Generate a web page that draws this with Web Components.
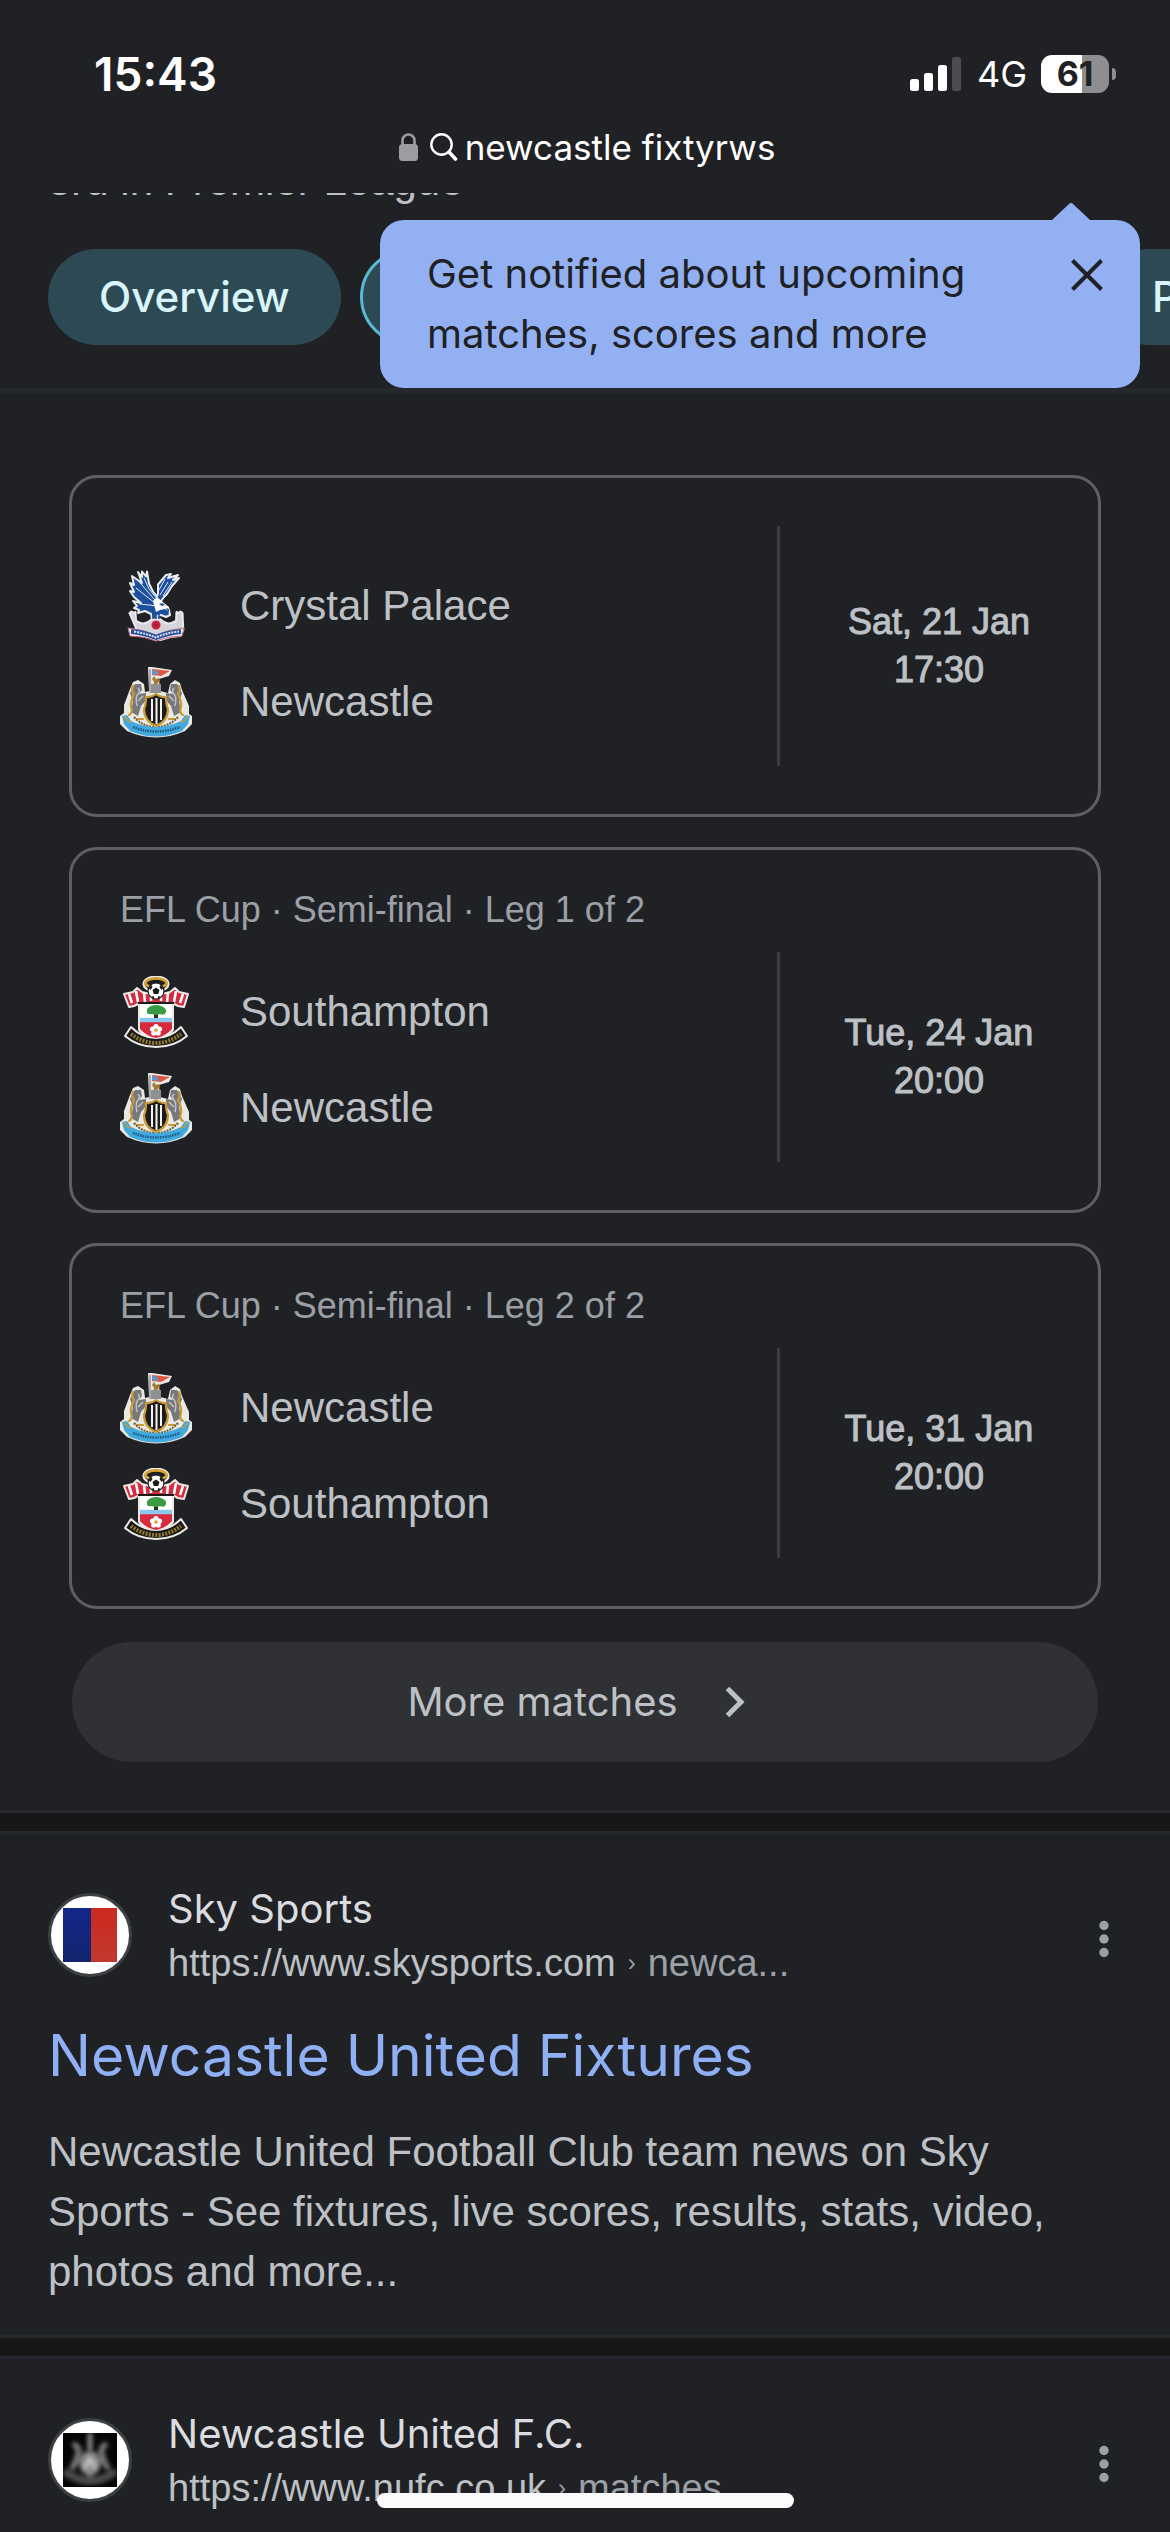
<!DOCTYPE html>
<html lang="en">
<head>
<meta charset="utf-8">
<meta name="viewport" content="width=device-width, initial-scale=1">
<title>newcastle fixtyrws</title>
<style>
  :root {
    --bg: #202124;
    --text: #bdc1c6;
    --muted: #9aa0a6;
    --sans: "Liberation Sans", Arial, sans-serif;
    --ui: Inter, Roboto, sans-serif;
  }
  html, body { margin: 0; height: 100%; background: var(--bg); }
  body { font-family: var(--sans); color: var(--text); }
</style>
</head>
<body>
<search-page></search-page>

<script>
const define = (name, html, setup) => {
  const template = document.createElement('template');
  template.innerHTML = html;
  customElements.define(name, class extends HTMLElement {
    constructor() {
      super();
      this.attachShadow({ mode: 'open' }).append(template.content.cloneNode(true));
    }
    connectedCallback() { if (setup) setup(this, this.shadowRoot); }
  });
};

/* ---------- status bar ---------- */
define('status-bar', `
<style>
  :host { display: flex; flex: none; justify-content: space-between; align-items: center; height: 76px; padding: 36px 54px 0 94px;
    font-family: var(--ui); color: #fff; }
  time { font-size: 46px; font-weight: 600; line-height: 56px; }
  .right { display: flex; align-items: center; }
  .net { font-size: 36px; line-height: 44px; margin: 0 14px 0 16px; }
  .battery { display: flex; align-items: center; gap: 3px; }
  .cell { width: 68px; height: 38px; border-radius: 11px; background: linear-gradient(90deg, #fff 60%, #8e8e91 60%);
    color: #202124; font-size: 34px; line-height: 38px; font-weight: 700; text-align: center; }
  .tip { width: 4px; height: 12px; border-radius: 0 4px 4px 0; background: #8e8e91; }
</style>
<time>15:43</time>
<div class="right">
  <svg width="51" height="34" viewBox="0 0 51 34" fill="#fff" aria-hidden="true">
    <rect x="0" y="22" width="9" height="12" rx="2.5"/><rect x="14" y="16" width="9" height="18" rx="2.5"/>
    <rect x="28" y="8" width="9" height="26" rx="2.5"/><rect x="42" y="0" width="9" height="34" rx="2.5" fill="#4d4d4f"/>
  </svg>
  <span class="net">4G</span>
  <div class="battery"><div class="cell">61</div><div class="tip"></div></div>
</div>`);

/* ---------- address bar ---------- */
define('address-bar', `
<style>
  :host { display: flex; flex: none; justify-content: center; align-items: center; padding: 11px 0 22px 4px; color: #fff;
    font: 35px/48px var(--ui); }
  .lock { margin-right: 12px; } .glass { margin-right: 7px; }
</style>
<svg class="lock" width="19" height="28" viewBox="0 0 19 28" aria-hidden="true">
  <rect x="0" y="11" width="19" height="17" rx="3.5" fill="#9c9ca1"/>
  <path d="M3.5 12V7.5a6 6 0 0 1 12 0V12" fill="none" stroke="#9c9ca1" stroke-width="2.6"/>
</svg>
<svg class="glass" width="28" height="28" viewBox="0 0 28 28" fill="none" stroke="#fff" stroke-linecap="round" aria-hidden="true">
  <circle cx="11.5" cy="11.5" r="10.2" stroke-width="2.4"/><path d="M19 19l6.5 7" stroke-width="3.6"/>
</svg>
<span><slot></slot></span>`);

/* ---------- filter chips ---------- */
define('filter-chip', `
<style>
  :host { display: block; flex: none; }
  :host([selected]) { flex: 1; }
  button { box-sizing: border-box; width: 100%; height: 96px; padding: 0 51px; border: 0; border-radius: 48px; background: #2d4a54;
    color: #d9f5fb; font: 500 42px/60px var(--ui); }
  :host([selected]) button { border: 3px solid #5bb8d4; }
</style>
<button type="button"><slot></slot></button>`, (host, root) => {
  if (host.hasAttribute('label')) root.querySelector('button').setAttribute('aria-label', host.getAttribute('label'));
});

/* ---------- notification tip ---------- */
define('notify-tip', `
<style>
  :host { display: flex; align-items: flex-start; justify-content: space-between; box-sizing: border-box; width: 760px; padding: 24px 32px 24px 47px;
    border-radius: 24px; background: #93b1f2; color: #202124; font: 40px/60px var(--ui); }
  .arrow { position: absolute; right: 50px; bottom: 100%; }
  p { margin: 0; width: 580px; }
  button { display: flex; padding: 10px 0; margin: 0; border: 0; background: none; color: inherit; }
</style>
<svg class="arrow" width="38" height="17" viewBox="0 0 38 17" aria-hidden="true"><path d="M0 17L17 1q2-2 4 0L38 17z" fill="#93b1f2"/></svg>
<p><slot></slot></p>
<button type="button" aria-label="Dismiss">
  <svg width="42" height="42" viewBox="0 0 42 42" fill="none" stroke="#202124" stroke-width="4"><path d="M6.5 6.500l29 29M35.500 6.500l-29 29"/></svg>
</button>`);

/* ---------- club crests ---------- */
const crests = {
  palace: `
  <g stroke="#e9ebef" stroke-width="2" stroke-linejoin="round">
    <path fill="#d3d5da" d="M9.500 43l2-1.500 2 1.500 2-1 .5 9c6 3 8 3 12 1l4-3h8l4 3c4 2 6 2 12-1l.5-9 2 1 2-1.500 2 1.500.8 17-3 6-10 1-10 3-10-3-10-1-3-5z"/>
    <path fill="#1c4f9c" d="M22 13L18 2l4 5V1.500l4 5 1-5 2 12 4 8 4 5 1-3 0-9L46 5l5-1-3 4 10-3-5 5 6-2-7 8-5 8-3 3-5 7 6 2 4 4 1 5-4 2-5-2-4 1v4l-5-1-1-5-6-3-7 2 1-3-5-2 3-2-4-5 8 2-7-6-4-6 4 1-4-9 4 2-2-9z"/>
  </g>
  <path fill="none" stroke="#dfe8f6" stroke-width="1" d="M17 9l10 12 8 9M16 18l10 8 9 7M24 8l5 11 9 11M19 34l10 1 9 1M40 25l8-13M43 26l9-14M39 20l6-11"/>
  <path fill="#fff" d="M33 31l4-4 7 6 5 4 1 5-5-3-5 1-4 2z"/>
  <path d="M39 34q4-2 6 1l-3 1zM46 38l3 1 0 4z" fill="#1c4f9c"/>
  <path d="M33 41v8M36 42v7M39 41v8" stroke="#1c4f9c" stroke-width="1.500"/>
  <circle cx="36" cy="55" r="4.500" fill="#d0213f"/><path d="M33 55h6M36 52v6" stroke="#8e1c33" stroke-width="1"/>
  <path fill="#f6f0f4" stroke="#c8687e" stroke-width="1" d="M8 58q14 1 28 7 14-6 28-7l-2 8q-14 0-26 5-12-5-26-5z"/>
  <path fill="none" stroke="#26509c" stroke-width="5" d="M11 61.500q13 1 25 6 12-5 25-6"/>
  <path fill="none" stroke="#dfe6f3" stroke-width="2" stroke-dasharray="2 1" d="M14 61.500q12 2 22 6 11-5 23-6"/>`,
  newcastle: `
  <path fill="#e9e8e3" d="M28 1l4 0 20 3-3 6-10 3 1 12 8 2 2-9 5-4 5 3 2 7 7 16 0 8 3 2 0 8-7 7q-29 13-58 0l-7-7 0-8 4-3 0-8 6-16 3-7 5-2 6 4 1 8 4-1z"/>
  <path d="M30 3v24" stroke="#98989b" stroke-width="1.600"/>
  <path fill="#e2553f" d="M32 3l18 2-9 5-9-1z"/><path fill="#5b9bd1" d="M32 4l6 1v4l-6-1z"/>
  <path fill="#a27c35" d="M34 10l2 3 3-1 1 3-3 3 1 3h-5l1-5-2-3z"/><path fill="#8f9092" d="M31 18h10v9H31z"/>
  <path fill="#77787b" d="M15 18l6 0 1 6-3 4 7-1 0 7-5 6-3 10-7-4 2-11-3-8zM57 18l-6 0-1 6 3 4-7-1 0 7 5 6 3 10 7-4-2-11 3-8z"/>
  <path fill="none" stroke="#c3c4c6" stroke-width="1.500" d="M18 22q3 3 0 6t-1 12M23 30l-5 5M54 22q-3 3 0 6t1 12M49 30l5 5"/>
  <path fill="none" stroke="#c99a38" stroke-width="2.200" stroke-linecap="round" d="M13 20q-2 4 1 8-4 8-3 13 2 6-2 8M59 20q2 4-1 8 4 8 3 13-2 6 2 8M17 53h6M49 53h6"/>
  <path fill="#1c1c1e" stroke="#c99a38" stroke-width="2.200" d="M26 31q5 1 10-3 5 4 10 3 0 8 2 12 0 12-12 17-12-5-12-17 2-4 2-12z"/>
  <path d="M32 33v22M36.500 32v26M41 33v21" stroke="#f4f4f2" stroke-width="2"/>
  <path fill="none" stroke="#6d5a2e" stroke-width="2" stroke-dasharray="2 1" d="M14 51q8 9 20 10M58 51q-8 9-20 10"/>
  <path fill="#42a9df" d="M2 50l5-1 4 6q25 12 50 0l4-6 5 1-2 8-6 7q-26 11-52 0l-6-7z"/>
  <path fill="none" stroke="#c99a38" stroke-width="1.500" d="M4 50l4 5 3 1M68 50l-4 5-3 1"/>
  <path fill="none" stroke="#1d5a83" stroke-width="2.600" stroke-dasharray="1.500 1" d="M13 61q23 9 47 0"/>`,
  southampton: `
  <g stroke="#edeae6" stroke-width="2" stroke-linejoin="round">
    <ellipse cx="36" cy="8" rx="12.500" ry="7.500" fill="#202022"/>
    <path fill="#d62a3d" d="M4 18l9-2 4-4 5 4 8 2h12l8-2 5-4 4 4 9 2-4 13-6-1-6-3-8 3H28l-8-3-6 3-5 1z"/>
    <path fill="#fff" d="M19 27h34v27q-6 8-17 9-11-1-17-9z"/>
    <path fill="#1b1b1a" d="M11 51q11 11 25 11t25-11l6 9Q54 71 36 71T5 60z"/>
  </g>
  <path d="M9 18l3 9M16 15l2 11M24 17l1 9M31 19v6M41 19v6M48 17l-1 9M56 15l-2 11M63 18l-3 9" stroke="#fff" stroke-width="2.600"/>
  <path d="M18 27h36" stroke="#1b1b1a" stroke-width="2"/>
  <ellipse cx="36" cy="7" rx="10.500" ry="4.500" fill="none" stroke="#d9a52e" stroke-width="2.600"/>
  <circle cx="36" cy="15" r="8" fill="#fff" stroke="#1b1b1a" stroke-width="1.200"/>
  <path d="M36 11.500l3.500 2.500-1.300 4h-4.400l-1.300-4zM28.500 12l3-3 1 2-2 3zM43.500 12l-3-3-1 2 2 3zM31 21l3-1 0 3zM41 21l-3-1 0 3z" fill="#1b1b1a"/>
  <path d="M20 46h32v7q-6 7-16 9-10-2-16-9z" fill="#d62a3d"/><path d="M20 44h32" stroke="#8cc8ec" stroke-width="4.500"/>
  <path d="M34 37h4l0 5h-4z" fill="#25331f"/>
  <path d="M27 36q-1-4 4-6 6-2 10 0 6 2 5 6-1 4-6 2-5 2-8 0-5 1-5-2z" fill="#3a9b45"/>
  <g fill="#fff"><circle cx="36" cy="50.500" r="2.600"/><circle cx="39.500" cy="53" r="2.600"/><circle cx="38.200" cy="57" r="2.600"/><circle cx="33.800" cy="57" r="2.600"/><circle cx="32.500" cy="53" r="2.600"/></g>
  <circle cx="36" cy="54" r="1.800" fill="#d9a52e"/>
  <path d="M11 58q12 9 25 9t25-9" fill="none" stroke="#8f7a2e" stroke-width="4" stroke-dasharray="2 1.300"/>`
};
define('team-row', `
<style>
  :host { display: flex; align-items: center; gap: 48px; height: 72px; font-size: 42px; line-height: 60px; color: #bdc1c6; }
  svg { display: block; flex: none; }
</style>
<svg width="72" height="72" viewBox="0 0 72 72" aria-hidden="true"></svg>
<span><slot></slot></span>`, (host, root) => {
  root.querySelector('svg').innerHTML = crests[host.getAttribute('crest')];
});

/* ---------- match card ---------- */
define('match-card', `
<style>
  :host { display: block; border: 3px solid #5f6063; border-radius: 28px; padding: 48px 0; }
  :host([stage]) { padding-top: 36px; }
  .stage { display: none; margin: 0 0 18px 48px; font-size: 36px; line-height: 48px; color: var(--muted); }
  :host([stage]) .stage { display: block; }
  .body { display: grid; grid-template-columns: minmax(0, 705fr) minmax(0, 321fr); }
  .teams { display: flex; flex-direction: column; gap: 24px; padding: 44px 0 28px 48px; }
  :host([stage]) .teams { padding-top: 24px; padding-bottom: 18px; }
  .when { display: flex; flex-direction: column; align-items: center; justify-content: center; border-left: 3px solid #3c3d41;
    font-size: 36px; line-height: 48px; -webkit-text-stroke: 1px currentColor; }
</style>
<div class="stage"></div>
<div class="body">
  <div class="teams"><slot></slot></div>
  <div class="when"><slot name="day"></slot><slot name="time"></slot></div>
</div>`, (host, root) => {
  root.querySelector('.stage').textContent = host.getAttribute('stage') || '';
});

/* ---------- more button ---------- */
define('more-button', `
<style>
  :host { display: block; }
  button { display: flex; align-items: center; justify-content: center; gap: 47px; width: 100%; height: 120px; padding: 0 18px 0 0;
    border: 0; border-radius: 60px; background: #303134; color: var(--text); font: 40px/60px var(--ui); }
</style>
<button type="button"><span><slot></slot></span>
  <svg width="20" height="32" viewBox="0 0 20 32" fill="none" stroke="#bdc1c6" stroke-width="5" aria-hidden="true"><path d="M2.500 2.500L16 16 2.500 29.500"/></svg>
</button>`);

/* ---------- band between blocks ---------- */
define('block-gap', `
<style>:host { display: block; flex: none; height: 18px; background: #171717; border: solid #25282c; border-width: 3px 0; }</style>`);

/* ---------- search result ---------- */
const icons = {
  sky: `<defs><linearGradient id="b" x2="0" y2="1"><stop stop-color="#12278a"/><stop offset="1" stop-color="#12246c"/></linearGradient>
    <linearGradient id="r" x2="0" y2="1"><stop stop-color="#cc291f"/><stop offset="1" stop-color="#c0392f"/></linearGradient></defs>
    <rect width="28" height="54" fill="url(#b)"/><rect x="28" width="26" height="54" fill="url(#r)"/>`,
  nufc: `<defs><filter id="s"><feGaussianBlur stdDeviation="2"/></filter></defs><rect width="54" height="54" fill="#050505"/>
    <g filter="url(#s)" fill="none" stroke-linecap="round"><path d="M27 2v14" stroke="#8a8a8a" stroke-width="5"/>
    <path d="M12 12q5 3 3 10t-5 12M42 12q-5 3-3 10t5 12" stroke="#777" stroke-width="6"/>
    <path d="M4 40q23 16 46 0" stroke="#4c4c4c" stroke-width="8"/>
    <path d="M21 19h12l5 10-2 9-9 6-9-6-2-9z" fill="#8b8b8b"/><path d="M22 34l5-8 5 8" stroke="#ccc" stroke-width="3"/></g>`
};
define('search-result', `
<style>
  :host { display: block; flex: none; padding: 48px 48px 33px; }
  header { display: flex; align-items: center; }
  .icon { display: flex; align-items: center; justify-content: center; flex: none; box-sizing: border-box; width: 84px; height: 84px;
    margin-right: 36px; border: 3px solid #3c4043; border-radius: 50%; background: #fff; }
  .source { flex: 1; min-width: 0; }
  .name { font: 40px/54px var(--ui); color: #dadce0; margin-bottom: 3px; }
  .url { display: flex; align-items: center; gap: 12px; font-size: 38px; line-height: 48px; white-space: nowrap; }
  .crumb { font-size: 24px; }
  .crumb, .path { color: var(--muted); }
  .menu { display: flex; margin: 0; padding: 9px 0 0; border: 0; background: none; }
  h3 { margin: 30px 0 27px; font: 57px/78px var(--ui); }
  h3 a { color: #8fb0f4; text-decoration: none; }
  p { margin: 0; font-size: 42px; line-height: 60px; max-width: 1020px; }
</style>
<header>
  <div class="icon"><svg width="54" height="54" viewBox="0 0 54 54" aria-hidden="true"></svg></div>
  <div class="source">
    <div class="name"><slot name="name"></slot></div>
    <div class="url"><slot name="url"></slot><span class="crumb">›</span><span class="path"><slot name="path"></slot></span></div>
  </div>
  <button class="menu" type="button" aria-label="About this result">
    <svg width="36" height="42" viewBox="0 0 36 42" fill="#9aa0a6"><circle cx="18" cy="7.500" r="4.700"/><circle cx="18" cy="21" r="4.700"/><circle cx="18" cy="34.500" r="4.700"/></svg>
  </button>
</header>
<div class="detail"><h3><a href="#"><slot name="title"></slot></a></h3><p><slot></slot></p></div>`, (host, root) => {
  root.querySelector('.icon svg').innerHTML = icons[host.getAttribute('icon')];
  if (!host.querySelector('[slot=title]')) root.querySelector('.detail').remove();
});

/* ---------- whole page ---------- */
define('search-page', `
<style>
  :host { display: flex; flex-direction: column; height: 100vh; overflow: hidden; position: relative; }
  .top { flex: none; position: relative; overflow: hidden; padding-bottom: 42px; border-bottom: 6px solid #24272b; }
  .rank { margin: -42px 48px 38px; font-size: 42px; line-height: 60px; }
  .chips { display: flex; gap: 19px; margin-left: 48px; margin-right: -60px; }
  notify-tip { position: absolute; right: 30px; bottom: 0; }
  .matches { flex: none; display: flex; flex-direction: column; gap: 30px; padding: 81px 69px 48px; }
  more-button { margin: 3px 3px 0; }
  .home { position: absolute; bottom: 24px; left: 50%; width: 417px; height: 15px; margin-left: -208px; border-radius: 8px; background: #fbfbfb; }
</style>
<status-bar></status-bar>
<address-bar>newcastle fixtyrws</address-bar>
<section class="top">
  <div class="rank">3rd in Premier League</div>
  <nav class="chips">
    <filter-chip>Overview</filter-chip>
    <filter-chip selected label="Matches"></filter-chip>
    <filter-chip>P</filter-chip>
  </nav>
  <notify-tip>Get notified about upcoming matches, scores and more</notify-tip>
</section>
<section class="matches">
  <match-card>
    <team-row crest="palace">Crystal Palace</team-row><team-row crest="newcastle">Newcastle</team-row>
    <span slot="day">Sat, 21 Jan</span><span slot="time">17:30</span>
  </match-card>
  <match-card stage="EFL Cup · Semi-final · Leg 1 of 2">
    <team-row crest="southampton">Southampton</team-row><team-row crest="newcastle">Newcastle</team-row>
    <span slot="day">Tue, 24 Jan</span><span slot="time">20:00</span>
  </match-card>
  <match-card stage="EFL Cup · Semi-final · Leg 2 of 2">
    <team-row crest="newcastle">Newcastle</team-row><team-row crest="southampton">Southampton</team-row>
    <span slot="day">Tue, 31 Jan</span><span slot="time">20:00</span>
  </match-card>
  <more-button>More matches</more-button>
</section>
<block-gap></block-gap>
<search-result icon="sky">
  <span slot="name">Sky Sports</span><span slot="url">https://www.skysports.com</span><span slot="path">newca...</span>
  <span slot="title">Newcastle United Fixtures</span>
  Newcastle United Football Club team news on Sky Sports - See fixtures, live scores, results, stats, video, photos and more...
</search-result>
<block-gap></block-gap>
<search-result icon="nufc">
  <span slot="name">Newcastle United F.C.</span><span slot="url">https://www.nufc.co.uk</span><span slot="path">matches</span>
</search-result>
<div class="home"></div>`);
</script>
</body>
</html>
